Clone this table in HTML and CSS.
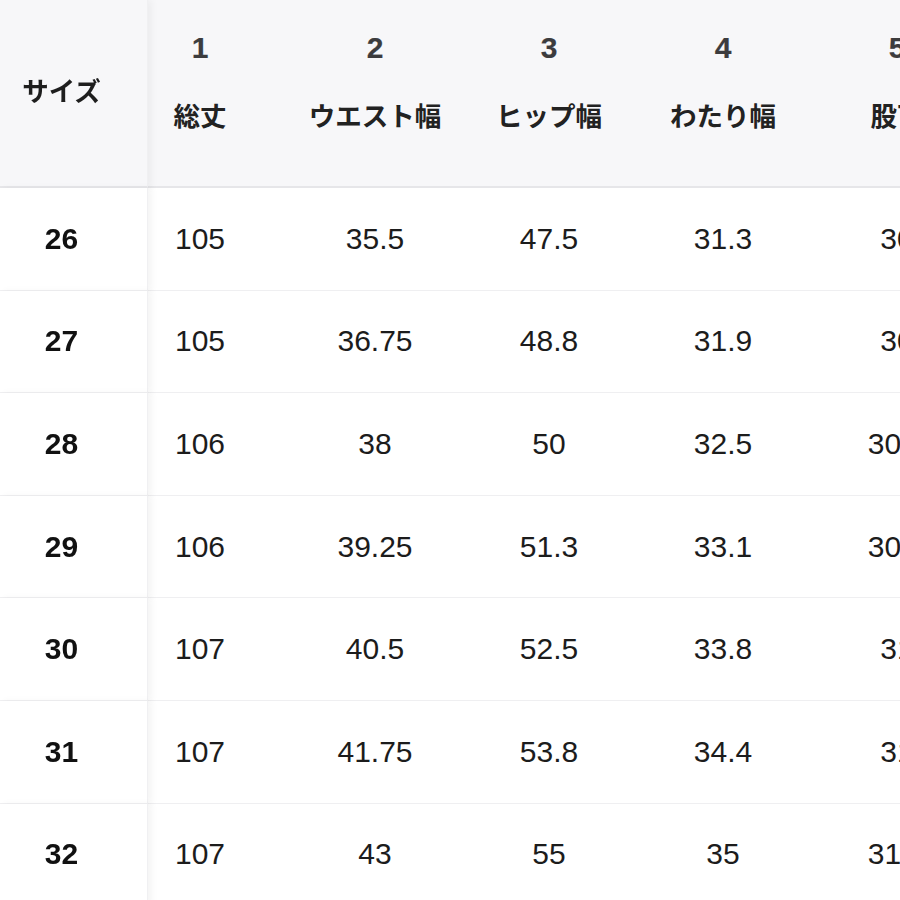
FILE: index.html
```html
<!DOCTYPE html>
<html lang="ja">
<head>
<meta charset="utf-8">
<title>サイズ表</title>
<link rel="stylesheet" href="styles.css">
</head>
<body>
<div class="wrap">
<table class="size-table">
<colgroup>
<col class="c-size"><col class="c-first"><col class="c-w"><col class="c-w"><col class="c-w"><col class="c-w">
</colgroup>
<thead>
<tr>
<th class="stick head-size"><span class="size-lbl">サイズ</span></th>
<th class="first"><div class="hd"><span class="num">1</span><span class="lbl">総丈</span></div></th>
<th><div class="hd"><span class="num">2</span><span class="lbl">ウエスト幅</span></div></th>
<th><div class="hd"><span class="num">3</span><span class="lbl">ヒップ幅</span></div></th>
<th><div class="hd"><span class="num">4</span><span class="lbl">わたり幅</span></div></th>
<th><div class="hd"><span class="num">5</span><span class="lbl">股下</span></div></th>
</tr>
</thead>
<tbody>
<tr><td class="stick">26</td><td class="first">105</td><td>35.5</td><td>47.5</td><td>31.3</td><td>30</td></tr>
<tr><td class="stick">27</td><td class="first">105</td><td>36.75</td><td>48.8</td><td>31.9</td><td>30</td></tr>
<tr><td class="stick">28</td><td class="first">106</td><td>38</td><td>50</td><td>32.5</td><td>30.5</td></tr>
<tr><td class="stick">29</td><td class="first">106</td><td>39.25</td><td>51.3</td><td>33.1</td><td>30.5</td></tr>
<tr><td class="stick">30</td><td class="first">107</td><td>40.5</td><td>52.5</td><td>33.8</td><td>31</td></tr>
<tr><td class="stick">31</td><td class="first">107</td><td>41.75</td><td>53.8</td><td>34.4</td><td>31</td></tr>
<tr><td class="stick">32</td><td class="first">107</td><td>43</td><td>55</td><td>35</td><td>31.5</td></tr>
</tbody>
</table>
</div>
</body>
</html>
```
FILE: styles.css
```css
html, body {
  margin: 0;
  padding: 0;
  background: #ffffff;
}
.wrap {
  width: 900px;
  height: 900px;
  overflow: hidden;
  font-family: "Liberation Sans", "Noto Sans CJK JP", sans-serif;
  color: #1f1f1f;
}
.size-table {
  border-collapse: separate;
  border-spacing: 0;
  table-layout: fixed;
  width: 984px;
}
.c-size { width: 148px; }
.c-first { width: 140px; }
.c-w { width: 174px; }

th {
  height: 186px;
  background: #f7f7f9;
  border-bottom: 2px solid #e6e6e9;
  padding: 0;
  text-align: center;
  vertical-align: top;
  white-space: nowrap;
}
th.first, td.first {
  padding-right: 36px;
}
.hd {
  display: flex;
  flex-direction: column;
  align-items: center;
  padding-top: 28px;
  gap: 28px;
}
.num {
  font-size: 30px;
  line-height: 40px;
  color: #3c3c3e;
  -webkit-text-stroke: 0.2px #3c3c3e;
}
.lbl {
  font-family: "Noto Sans CJK JP", sans-serif;
  font-size: 26.5px;
  line-height: 38px;
  font-weight: 700;
  color: #222222;
}
.head-size {
  vertical-align: middle;
  font-family: "Noto Sans CJK JP", sans-serif;
  font-size: 26.5px;
  font-weight: 700;
  color: #1e1e1e;
  padding-right: 24px;
}
.size-lbl {
  display: block;
  line-height: 38px;
  margin-bottom: 6px;
}
.stick {
  position: sticky;
  left: 0;
  z-index: 1;
  box-shadow: 4px 0 7px rgba(0, 0, 0, 0.045);
  border-right: 1px solid #f0f0f2;
}
td {
  height: 102.6px;
  box-sizing: border-box;
  padding: 0;
  text-align: center;
  vertical-align: middle;
  font-size: 30px;
  color: #1c1c1c;
  border-bottom: 1px solid #efeff1;
  white-space: nowrap;
}
td.stick {
  background: #ffffff;
  font-weight: 700;
  color: #111111;
  padding-right: 24px;
}
```
